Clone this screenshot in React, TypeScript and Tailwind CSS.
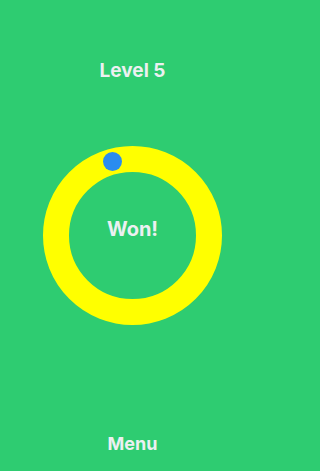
export default function App() {
  return (
    <div className="min-h-[471px] w-full bg-[#2ecc71]">
      <div className="h-[471px] w-[265px] flex flex-col items-center font-['Inter',sans-serif] text-[#ecf0f1] font-bold">
        <div className="mt-[60px] text-[19px] leading-[22px]">Level 5</div>
        {/* ring */}
        <div className="relative mt-[64px] w-[179px] h-[179px] rounded-full border-[26px] border-[#ffff00] flex items-center justify-center">
          <span className="text-[20px] leading-none -mt-[14px]">Won!</span>
          <div className="absolute left-[34px] -top-[20px] w-[19px] h-[19px] rounded-full bg-[#2a8cf0]" />
        </div>
        <div className="mt-auto mb-[16px] text-[18px] leading-[22px]">Menu</div>
      </div>
    </div>
  )
}
